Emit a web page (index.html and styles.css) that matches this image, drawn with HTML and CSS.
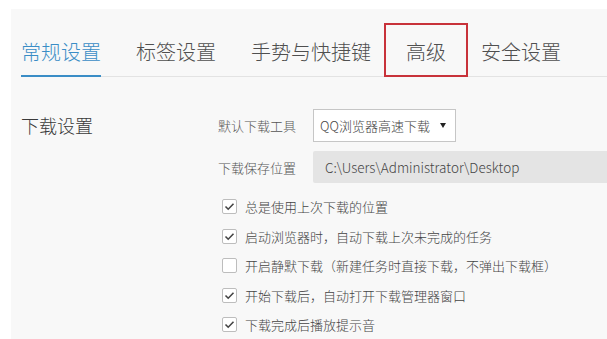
FILE: index.html
```html
<!DOCTYPE html>
<html lang="zh-CN">
<head>
  <meta charset="UTF-8">
  <title>设置</title>
  <link rel="stylesheet" href="styles.css">
</head>
<body>
  <div class="panel">
    <div class="tabs">
      <div class="tab active">常规设置</div>
      <div class="tab">标签设置</div>
      <div class="tab">手势与快捷键</div>
      <div class="tab marked">高级</div>
      <div class="tab">安全设置</div>
    </div>

    <div class="section">
      <div class="section-title">下载设置</div>
      <div class="fields">
        <div class="field">
          <span class="field-label">默认下载工具</span>
          <div class="select">
            <span>QQ浏览器高速下载</span>
            <span class="arrow"></span>
          </div>
        </div>
        <div class="field">
          <span class="field-label">下载保存位置</span>
          <div class="path">C:\Users\Administrator\Desktop</div>
        </div>

        <div class="options">
          <div class="option">
            <span class="box"><svg width="11" height="11" viewBox="0 0 11 11"><polyline points="1.5,5.5 4.2,8.2 9.5,2.8" /></svg></span>
            总是使用上次下载的位置
          </div>
          <div class="option">
            <span class="box"><svg width="11" height="11" viewBox="0 0 11 11"><polyline points="1.5,5.5 4.2,8.2 9.5,2.8" /></svg></span>
            启动浏览器时，自动下载上次未完成的任务
          </div>
          <div class="option">
            <span class="box"></span>
            开启静默下载（新建任务时直接下载，不弹出下载框）
          </div>
          <div class="option">
            <span class="box"><svg width="11" height="11" viewBox="0 0 11 11"><polyline points="1.5,5.5 4.2,8.2 9.5,2.8" /></svg></span>
            开始下载后，自动打开下载管理器窗口
          </div>
          <div class="option">
            <span class="box"><svg width="11" height="11" viewBox="0 0 11 11"><polyline points="1.5,5.5 4.2,8.2 9.5,2.8" /></svg></span>
            下载完成后播放提示音
          </div>
        </div>
      </div>
    </div>
  </div>
</body>
</html>
```

FILE: styles.css
```css
body {
  margin: 0;
  background-color: #fff;
  font-family: "Noto Sans CJK SC", "Microsoft YaHei", sans-serif;
  font-weight: 300;
  overflow: hidden;
}

.panel {
  margin: 9px 0 0 11px;
  padding-left: 10px;
  min-height: 330px;
  background-color: #f8f8f8;
}

/* tab bar */
.tabs {
  display: flex;
  gap: 35px;
  border-bottom: 1px solid #e3e3e3;
}

.tab {
  position: relative;
  padding: 33px 0 13px;
  margin-bottom: -1px;
  border-bottom: 2px solid transparent;
  font-size: 20px;
  line-height: 20px;
  color: #4f4f4f;
  white-space: nowrap;
}

.tab.active {
  color: #3a8dc6;
  border-bottom-color: #3a8dc6;
}

/* red highlight drawn round the 高级 tab */
.tab.marked::after {
  content: "";
  position: absolute;
  left: -22px;
  right: -22px;
  top: 14px;
  bottom: -2px;
  border: 2px solid #c8323a;
}

/* download section */
.section {
  display: flex;
  padding-top: 32px;
}

.section-title {
  width: 197px;
  flex-shrink: 0;
  font-size: 18px;
  line-height: 33px;
  color: #3a3a3a;
}

.fields {
  flex: 1;
}

.field {
  display: flex;
  align-items: center;
  gap: 17px;
  margin-bottom: 9px;
}

.field-label {
  width: 78px;
  flex-shrink: 0;
  font-size: 13px;
  color: #555;
  white-space: nowrap;
}

.select {
  width: 143px;
  height: 33px;
  box-sizing: border-box;
  display: flex;
  align-items: center;
  justify-content: space-between;
  padding: 0 9px 0 6px;
  border: 1px solid #c6c6c6;
  background-color: #fff;
  font-size: 13px;
  color: #444;
  white-space: nowrap;
}

.arrow {
  width: 0;
  height: 0;
  border-left: 3.5px solid transparent;
  border-right: 3.5px solid transparent;
  border-top: 5px solid #222;
}

.path {
  flex-shrink: 0;
  width: 320px;
  height: 32px;
  box-sizing: border-box;
  padding-left: 12px;
  border-radius: 2px 0 0 2px;
  background-color: #e4e4e4;
  font-size: 13.5px;
  line-height: 32px;
  color: #444;
  white-space: nowrap;
}

/* checkbox list */
.options {
  margin-top: 6px;
}

.option {
  display: flex;
  align-items: center;
  gap: 8px;
  height: 29.5px;
  padding-left: 4px;
  font-size: 13px;
  color: #444;
  white-space: nowrap;
}

.box {
  width: 15px;
  height: 15px;
  box-sizing: border-box;
  display: flex;
  align-items: center;
  justify-content: center;
  border: 1px solid #bdbdbd;
  border-radius: 2px;
  background-color: #fff;
}

.box polyline {
  fill: none;
  stroke: #444;
  stroke-width: 1.6;
}
```
